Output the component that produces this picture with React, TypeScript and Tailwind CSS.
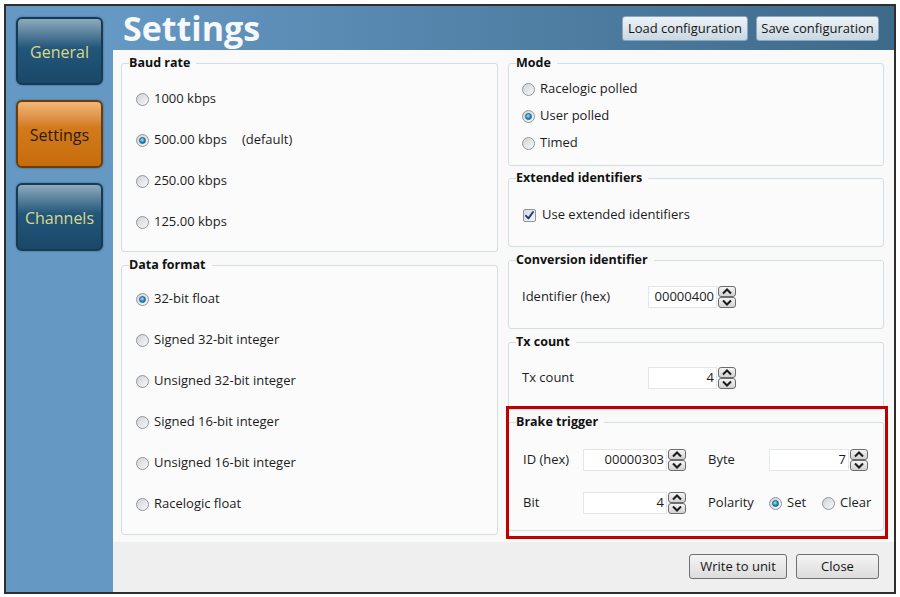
import type { ReactNode } from 'react'

const FONT = { fontFamily: '"Open Sans", "Noto Sans", sans-serif' }

function Radio({ checked = false }: { checked?: boolean }) {
  return (
    <span className="flex h-[13px] w-[13px] shrink-0 items-center justify-center rounded-full border border-[#8e979e] bg-linear-to-br from-[#cfd2d4] to-[#f9f9f9]">
      {checked && (
        <span className="h-[7px] w-[7px] rounded-full border border-[#1d5c80] bg-[radial-gradient(circle_at_40%_35%,#a6e0ff,#2391cc_55%,#0d5a86)]" />
      )}
    </span>
  )
}

function RadioItem({ label, checked, extra }: { label: string; checked?: boolean; extra?: string }) {
  return (
    <label className="flex h-[20px] items-center gap-[5px]">
      <Radio checked={checked} />
      <span>{label}</span>
      {extra && <span className="ml-[10px]">{extra}</span>}
    </label>
  )
}

function Checkbox() {
  return (
    <span className="flex h-[13px] w-[13px] shrink-0 items-center justify-center rounded-[2px] border border-[#8e979e] bg-linear-to-br from-[#d6d8da] to-[#f7f7f7]">
      <svg width="11" height="11" viewBox="0 0 11 11">
        <path d="M2 5.8 L4.4 8.4 L9 2" fill="none" stroke="#26358a" strokeWidth="1.9" strokeLinecap="round" strokeLinejoin="round" />
      </svg>
    </span>
  )
}

function Group({ title, className = '', children }: { title: string; className?: string; children: ReactNode }) {
  return (
    <fieldset className={`rounded-[3px] border border-[#d3dde4] bg-[#fbfbfb] px-[8px] ${className}`}>
      <legend className="ml-[-1px] pr-[6px] text-[12.5px] leading-[16px] font-bold text-[#111]">{title}</legend>
      {children}
    </fieldset>
  )
}

function Spinner() {
  const btn = 'flex h-[11px] w-[18px] items-center justify-center rounded-[3px] border border-[#6d6d6d] bg-linear-to-b from-[#f4f4f4] to-[#d2d2d2]'
  return (
    <div className="ml-[1px] flex flex-col">
      <div className={btn}>
        <svg width="12" height="7" viewBox="0 0 12 7"><path d="M2 5.5 L6 1.5 L10 5.5" fill="none" stroke="#1b1b1b" strokeWidth="2" /></svg>
      </div>
      <div className={btn}>
        <svg width="12" height="7" viewBox="0 0 12 7"><path d="M2 1.5 L6 5.5 L10 1.5" fill="none" stroke="#1b1b1b" strokeWidth="2" /></svg>
      </div>
    </div>
  )
}

function NumberInput({ value, width }: { value: string; width: string }) {
  return (
    <div className="flex items-center">
      <div className={`flex h-[22px] ${width} items-center justify-end border border-[#e1e7ec] bg-white pr-[2px] text-[#1b1b1b]`}>{value}</div>
      <Spinner />
    </div>
  )
}

function NavButton({ label, active = false }: { label: string; active?: boolean }) {
  return (
    <div
      className={`flex h-[68px] w-[87px] items-center justify-center rounded-[6px] border-2 text-[16px] shadow-[0_0_2px_rgba(20,50,80,0.6)] ${
        active
          ? 'border-[#6a3d0a] bg-linear-to-b from-[#f2b677] via-[#d27b1c] via-40% to-[#c76c0c] text-[#2b1c05]'
          : 'border-[#163a52] bg-linear-to-b from-[#8eabbd] via-[#22577a] via-45% to-[#1a4868] text-[#dcd78e]'
      }`}
    >
      <span className="pt-[2px]">{label}</span>
    </div>
  )
}

function HeaderButton({ label, width }: { label: string; width: string }) {
  return (
    <button className={`h-[25px] ${width} rounded-[3px] border border-[#8fa7ba] bg-linear-to-b from-[#eef3f6] to-[#c9d8e3] text-[13px] text-[#151515]`}>
      {label}
    </button>
  )
}

function FooterButton({ label, width }: { label: string; width: string }) {
  return (
    <button className={`h-[25px] ${width} rounded-[3px] border border-[#707070] bg-linear-to-b from-[#f4f4f4] to-[#dcdcdc] text-[13px] text-[#151515]`}>
      {label}
    </button>
  )
}

export default function App() {
  return (
    <div className="h-[597px] w-[900px] bg-white pt-[4px] pl-[4px]" style={FONT}>
      <div className="flex h-[590px] w-[892px] border-2 border-[#2e2e2e] text-[13px] text-[#1b1b1b]">
        {/* Sidebar */}
        <div className="flex w-[107px] shrink-0 flex-col gap-[15px] bg-[#6598c3] pt-[11px] pl-[10px]">
          <NavButton label="General" />
          <NavButton label="Settings" active />
          <NavButton label="Channels" />
        </div>

        <div className="flex w-[781px] flex-col">
          {/* Header */}
          <div className="flex h-[44px] shrink-0 items-start justify-between bg-linear-to-r from-[#6598c3] to-[#3e6a8a] pr-[15px] pl-[10px]">
            <h1 className="pt-[5px] text-[34px] leading-[34px] font-bold text-[#f6f8fa]">Settings</h1>
            <div className="flex gap-[8px] pt-[10px]">
              <HeaderButton label="Load configuration" width="w-[126px]" />
              <HeaderButton label="Save configuration" width="w-[123px]" />
            </div>
          </div>

          {/* Content */}
          <div className="flex h-[492px] gap-[10px] bg-[#f9f9f9] pt-[5px] pr-[10px] pl-[8px]">
            <div className="flex w-[377px] flex-col gap-[5px]">
              <Group title="Baud rate" className="pt-[18px] pb-[19px]">
                <div className="flex flex-col gap-[21px] pl-[6px]">
                  <RadioItem label="1000 kbps" />
                  <RadioItem label="500.00 kbps" extra="(default)" checked />
                  <RadioItem label="250.00 kbps" />
                  <RadioItem label="125.00 kbps" />
                </div>
              </Group>
              <Group title="Data format" className="pt-[16px] pb-[20px]">
                <div className="flex flex-col gap-[21px] pl-[6px]">
                  <RadioItem label="32-bit float" checked />
                  <RadioItem label="Signed 32-bit integer" />
                  <RadioItem label="Unsigned 32-bit integer" />
                  <RadioItem label="Signed 16-bit integer" />
                  <RadioItem label="Unsigned 16-bit integer" />
                  <RadioItem label="Racelogic float" />
                </div>
              </Group>
            </div>

            <div className="flex w-[376px] flex-col">
              <Group title="Mode" className="pt-[8px] pb-[12px]">
                <div className="flex flex-col gap-[7px] pl-[5px]">
                  <RadioItem label="Racelogic polled" />
                  <RadioItem label="User polled" checked />
                  <RadioItem label="Timed" />
                </div>
              </Group>
              <Group title="Extended identifiers" className="mt-[4px] pt-[19px] pb-[21px]">
                <label className="flex h-[20px] items-center gap-[6px] pl-[6px]">
                  <Checkbox />
                  <span>Use extended identifiers</span>
                </label>
              </Group>
              <Group title="Conversion identifier" className="mt-[5px] pt-[18px] pb-[20px]">
                <div className="flex items-center pl-[5px]">
                  <span className="w-[126px]">Identifier (hex)</span>
                  <NumberInput value="00000400" width="w-[69px]" />
                </div>
              </Group>
              <Group title="Tx count" className="mt-[5px] pt-[17px] pb-[20px]">
                <div className="flex items-center pl-[5px]">
                  <span className="w-[126px]">Tx count</span>
                  <NumberInput value="4" width="w-[69px]" />
                </div>
              </Group>

              {/* Brake trigger, with red highlight frame */}
              <div className="relative mt-[4px]">
                <Group title="Brake trigger" className="pt-[19px] pb-[16px]">
                  <div className="flex flex-col gap-[21px] pl-[6px]">
                    <div className="flex items-center">
                      <span className="w-[60px]">ID (hex)</span>
                      <NumberInput value="00000303" width="w-[84px]" />
                      <span className="ml-[22px] w-[61px]">Byte</span>
                      <NumberInput value="7" width="w-[80px]" />
                    </div>
                    <div className="flex items-center">
                      <span className="w-[60px]">Bit</span>
                      <NumberInput value="4" width="w-[84px]" />
                      <span className="ml-[22px] w-[61px]">Polarity</span>
                      <label className="flex items-center gap-[5px]">
                        <Radio checked />
                        <span>Set</span>
                      </label>
                      <label className="ml-[16px] flex items-center gap-[5px]">
                        <Radio />
                        <span>Clear</span>
                      </label>
                    </div>
                  </div>
                </Group>
                <div className="pointer-events-none absolute top-[-8px] right-[-4px] bottom-[-8px] left-[-2px] border-[3px] border-[#c00000]" />
              </div>
            </div>
          </div>

          {/* Footer */}
          <div className="flex h-[50px] shrink-0 justify-end gap-[9px] bg-[#efefef] pt-[12px] pr-[15px]">
            <FooterButton label="Write to unit" width="w-[98px]" />
            <FooterButton label="Close" width="w-[83px]" />
          </div>
        </div>
      </div>
    </div>
  )
}
